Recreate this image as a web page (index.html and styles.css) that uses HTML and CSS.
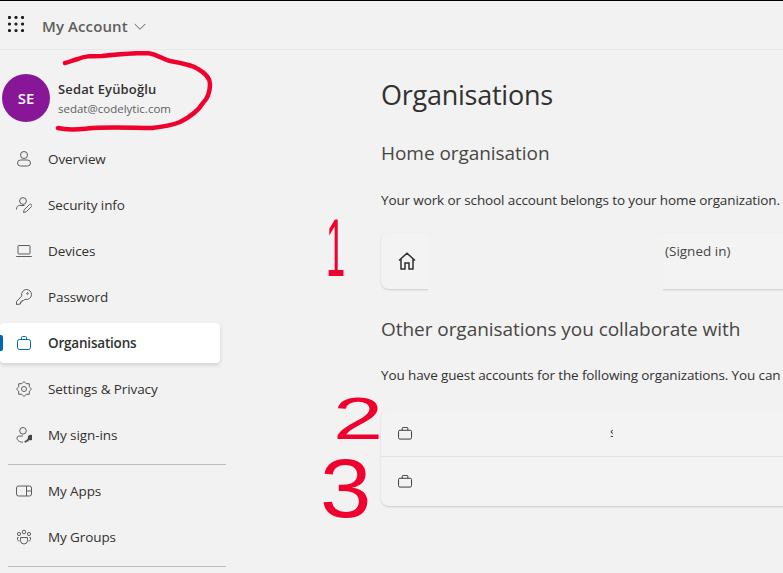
FILE: index.html
```html
<!DOCTYPE html>
<html lang="en">
<head>
<meta charset="utf-8">
<title>My Account - Organisations</title>
<link rel="stylesheet" href="styles.css">
</head>
<body>
<div class="page">
  <header class="topbar">
    <svg class="waffle" width="16" height="16" viewBox="0 0 16 16"><g fill="#201f1e"><circle cx="1.500" cy="1.500" r="1.600"/><circle cx="8" cy="1.500" r="1.600"/><circle cx="14.500" cy="1.500" r="1.600"/><circle cx="1.500" cy="8" r="1.600"/><circle cx="8" cy="8" r="1.600"/><circle cx="14.500" cy="8" r="1.600"/><circle cx="1.500" cy="14.500" r="1.600"/><circle cx="8" cy="14.500" r="1.600"/><circle cx="14.500" cy="14.500" r="1.600"/></g></svg>
    <span class="brand">My Account</span>
    <svg class="chev" width="12" height="8" viewBox="0 0 12 8"><path d="M.7 1 6 6.300 11.300 1" fill="none" stroke="#605e5c"/></svg>
  </header>
  <div class="body">
    <nav class="nav">
      <div class="profile">
        <div class="avatar">SE</div>
        <div class="who">
          <div class="name">Sedat Eyüboğlu</div>
          <div class="mail">sedat@codelytic.com</div>
        </div>
      </div>
      <a class="item">
        <svg class="ico" viewBox="0 0 16 16" width="16" height="16"><circle cx="8" cy="4" r="3.500"/><rect x="1.500" y="9" width="13" height="6" rx="3"/></svg>
        <span>Overview</span>
      </a>
      <a class="item">
        <svg class="ico" viewBox="0 0 16 16" width="16" height="16"><circle cx="7" cy="4" r="3.400"/><path d="M.5 12.500C.5 9.500 2 8.500 3.500 8.500H8.500"/><path d="M7.500 15.500 8.200 12.800 13.500 7.500A1.300 1.300 0 0 1 15.500 9.500L10.200 14.800Z"/></svg>
        <span>Security info</span>
      </a>
      <a class="item">
        <svg class="ico" viewBox="0 0 16 16" width="16" height="16"><rect x="2" y="2.500" width="12" height="8.500" rx="1"/><path d="M.2 13.500H15.800"/></svg>
        <span>Devices</span>
      </a>
      <a class="item">
        <svg class="ico" viewBox="0 0 16 16" width="16" height="16"><path d="M10.500.5A5 5 0 0 1 15.500 5.500 5 5 0 0 1 9 10.300L7.500 11.500H6V13H4.500V15L.5 15.500V12.500L5.800 7A5 5 0 0 1 10.500.5Z"/><circle cx="11.500" cy="4.500" r=".8"/></svg>
        <span>Password</span>
      </a>
      <a class="item active">
        <svg class="ico" viewBox="0 0 16 16" width="16" height="16"><rect x="1.500" y="4.500" width="13" height="10" rx="2"/><path d="M5.500 4.500V2.500A1 1 0 0 1 6.500 1.500H9.500A1 1 0 0 1 10.500 2.500V4.500"/></svg>
        <span>Organisations</span>
      </a>
      <a class="item">
        <svg class="ico" viewBox="0 0 16 16" width="16" height="16"><circle cx="8" cy="8" r="2.500"/><path d="M8 .5 10.180 2.730 13.300 2.700 13.270 5.820 15.500 8 13.270 10.180 13.300 13.300 10.180 13.270 8 15.500 5.820 13.270 2.700 13.300 2.730 10.180.5 8 2.730 5.820 2.700 2.700 5.820 2.730Z"/></svg>
        <span>Settings &amp; Privacy</span>
      </a>
      <a class="item">
        <svg class="ico" viewBox="0 0 16 16" width="16" height="16"><circle cx="7" cy="3.800" r="3.300"/><path d="M7 9H3A2 2 0 0 0 1 11C1 13.500 3.500 15.200 7 15.200"/><path class="solid" d="M10 13.500 12 11.500A2.800 2.800 0 1 1 13.800 13.200H12.500V14.500H11L10 15.500H8.500V14Z"/></svg>
        <span>My sign-ins</span>
      </a>
      <hr class="rule">
      <a class="item">
        <svg class="ico" viewBox="0 0 16 16" width="16" height="16"><rect x=".5" y="3" width="15" height="10" rx="2"/><path d="M10.500 3V13M10.500 8H15.500"/></svg>
        <span>My Apps</span>
      </a>
      <a class="item">
        <svg class="ico" viewBox="0 0 16 16" width="16" height="16"><circle cx="8" cy="3" r="1.800"/><circle cx="3" cy="5" r="1.600"/><circle cx="13" cy="5" r="1.600"/><path d="M4.500 8.500H11.500V11.500A3.500 3.500 0 0 1 4.500 11.500Z"/><path d="M2.500 8.500H1.500V10.500C1.500 11.500 2.500 12 3.500 12M13.500 8.500H14.500V10.500C14.500 11.500 13.500 12 12.500 12"/></svg>
        <span>My Groups</span>
      </a>
      <hr class="rule">
    </nav>
    <main class="main">
      <h1 class="title">Organisations</h1>
      <h2 class="sub">Home organisation</h2>
      <p class="desc">Your work or school account belongs to your home organization.</p>
      <section class="card home">
        <svg class="home-ico" viewBox="0 0 18 18" width="18" height="18"><path d="M1 8.500 9 1.200 17 8.500M3 7V17H7V11H11V17H15V7" fill="none" stroke="#323130" stroke-width="1.500"/></svg>
        <span class="signed">(Signed in)</span>
        <div class="mask"></div>
      </section>
      <h2 class="sub other">Other organisations you collaborate with</h2>
      <p class="desc guest">You have guest accounts for the following organizations. You can leave any organization at any time.</p>
      <section class="card guests">
        <div class="row">
          <svg class="case" viewBox="0 0 16 14" width="15" height="13"><rect x=".5" y="3.500" width="14" height="9.500" rx="1.500"/><path d="M4.500 3.500V1.500A1 1 0 0 1 5.500 .5H9.500A1 1 0 0 1 10.500 1.500V3.500"/></svg>
          <span class="frag">s</span>
        </div>
        <div class="row">
          <svg class="case" viewBox="0 0 16 14" width="15" height="13"><rect x=".5" y="3.500" width="14" height="9.500" rx="1.500"/><path d="M4.500 3.500V1.500A1 1 0 0 1 5.500 .5H9.500A1 1 0 0 1 10.500 1.500V3.500"/></svg>
        </div>
      </section>
    </main>
  </div>
  <svg class="scribble" width="220" height="90" viewBox="0 0 220 90"><path d="M25 12C30 11 33 9 38 8 45 5 50 5 62 5 80 3 95 2 107 2 117 3 122 8 130 10 142 12 152 14 158 18 165 22 170 27 170 33 170 40 169 46 163 52 158 60 148 67 140 71 130 75 122 76 112 77 95 77 75 76 53 77 40 78 30 80 18 77"/></svg>
  <span class="mark one">1</span>
  <span class="mark two">2</span>
  <span class="mark three">3</span>
</div>
</body>
</html>
```
FILE: styles.css
```css
* { box-sizing: border-box; }
html, body { margin: 0; padding: 0; }
body { background: #f2f2f2; font-family: "Open Sans", "Noto Sans", sans-serif; color: #323130; }
.page { position: relative; width: 783px; height: 573px; overflow: hidden; border-top: 1px solid #000; background: #f2f2f2; }
.topbar { height: 49px; display: flex; align-items: center; padding-left: 8px; border-bottom: 1px solid #e8e8e8; }
.waffle { margin-top: -2px; }
.brand { margin-left: 18px; margin-top: 2px; font-size: 15px; font-weight: 600; color: #605e5c; letter-spacing: .1px; }
.chev { margin-left: 6px; margin-top: 4px; }
.body { display: flex; }
.nav { width: 227px; flex: none; padding-top: 24px; }
.profile { display: flex; align-items: center; padding-left: 2px; height: 48px; margin-bottom: 17px; }
.avatar { width: 48px; height: 48px; border-radius: 50%; background: #881798; color: #fff; display: flex; align-items: center; justify-content: center; font-size: 15px; font-weight: 600; }
.who { margin-left: 8px; }
.name { font-size: 13px; font-weight: 600; color: #323130; line-height: 19px; margin-top: 2px; letter-spacing: .15px; }
.mail { font-size: 11.500px; color: #605e5c; line-height: 19px; }
.item { display: flex; align-items: center; height: 40px; margin: 0 7px 6px 0; padding-left: 16px; border-radius: 4px; font-size: 13.500px; color: #323130; letter-spacing: -.1px; position: relative; }
.item span { margin-left: 16px; }
.ico { fill: none; stroke: #605e5c; stroke-width: 1; flex: none; }
.ico .solid { fill: #484644; stroke: none; }
.active { background: #fff; box-shadow: 0 2px 4px rgba(0,0,0,.14); font-weight: 600; letter-spacing: -.2px; }
.active .ico { stroke: #0067b8; }
.active::before { content: ""; position: absolute; left: 0; top: 12px; width: 3px; height: 16px; background: #0067b8; border-radius: 0 2px 2px 0; }
.rule { border: 0; border-top: 1px solid #bdbdbd; margin: 9px 1px 6px 8px; height: 0; }
.main { flex: none; width: 556px; padding: 26px 0 0 154px; overflow: hidden; }
.title { margin: 0; font-size: 27px; font-weight: 400; line-height: 38px; color: #323130; letter-spacing: -.25px; white-space: nowrap; }
.sub { margin: 26px 0 0; font-size: 19px; font-weight: 400; line-height: 26px; color: #484644; letter-spacing: -.05px; white-space: nowrap; }
.desc { margin: 25px 0 0; font-size: 13.500px; line-height: 18px; color: #323130; letter-spacing: -.12px; white-space: nowrap; }
.card { margin-top: 24px; width: 500px; background: #f3f3f3; border-radius: 8px 0 0 8px; box-shadow: 0 1px 2px rgba(0,0,0,.16); position: relative; }
.home { height: 56px; }
.home-ico { position: absolute; left: 17px; top: 19px; }
.signed { position: absolute; left: 284px; top: 9px; font-size: 13.500px; line-height: 18px; color: #484644; }
.mask { position: absolute; left: 47px; top: 0; width: 235px; height: 60px; background: #f2f2f2; }
.other { margin-top: 27px; }
.guest { margin-top: 24px; }
.guests { margin-top: 26px; height: 96px; }
.row { height: 47px; border-bottom: 1px solid #e1e1e1; display: flex; align-items: center; padding-left: 17px; position: relative; }
.row:last-child { border-bottom: 0; height: 48px; }
.case { fill: none; stroke: #323130; stroke-width: 1; }
.frag { position: absolute; left: 229px; top: 13px; width: 3px; overflow: hidden; font-size: 13px; line-height: 18px; color: #323130; }
.scribble { position: absolute; left: 40px; top: 50px; }
.scribble path { fill: none; stroke: #f0002d; stroke-width: 4.500px; stroke-linecap: round; stroke-linejoin: round; }
.mark { position: absolute; font-family: "Liberation Sans", sans-serif; color: #f0002d; line-height: .8; transform-origin: left top; }
.one { left: 326px; top: 214px; font-size: 82px; transform: scaleX(.42); }
.two { left: 333px; top: 394px; font-size: 60px; transform: scaleX(1.500); }
.three { left: 320px; top: 454px; font-size: 84px; transform: scaleX(1.100); }
```
